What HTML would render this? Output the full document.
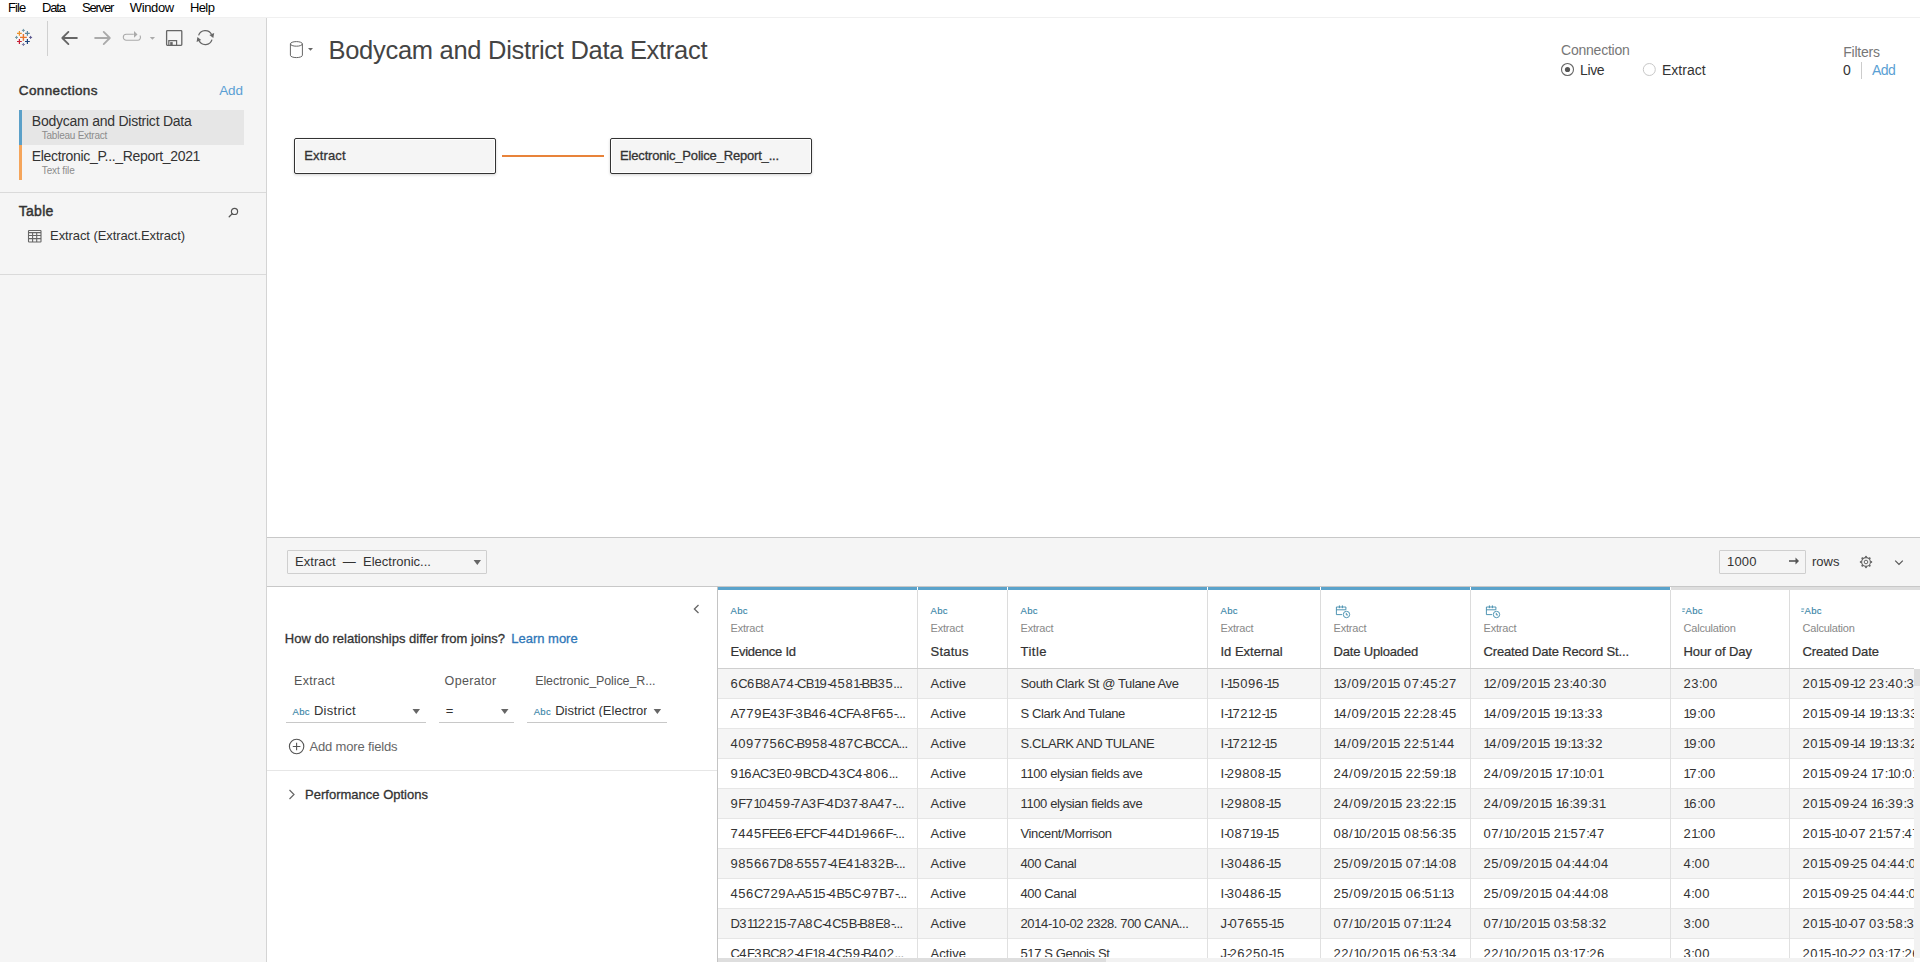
<!DOCTYPE html>
<html><head><meta charset="utf-8"><title>Tableau - Data Source</title>
<style>
*{box-sizing:border-box;margin:0;padding:0}
html,body{width:1920px;height:962px;overflow:hidden;background:#fff;font-family:"Liberation Sans",sans-serif;color:#333}
.r{position:absolute}
.t{position:absolute;white-space:pre}
</style></head>
<body>
<div class="r" style="left:0px;top:0px;width:1920px;height:17px;background:#fff;"></div><div class="r" style="left:0px;top:18px;width:266px;height:944px;background:#f5f5f5;"></div><div class="r" style="left:266px;top:18px;width:1px;height:944px;background:#d4d4d4;"></div><div class="r" style="left:267px;top:18px;width:1653px;height:519px;background:#fff;"></div><div class="r" style="left:0px;top:17px;width:1920px;height:1px;background:#f0f0f0;"></div><div class="r" style="left:267px;top:537px;width:1653px;height:1px;background:#c8c8c8;"></div><div class="r" style="left:267px;top:538px;width:1653px;height:48px;background:#f5f5f5;"></div><div class="r" style="left:267px;top:586px;width:1653px;height:1px;background:#c8c8c8;"></div><div class="r" style="left:267px;top:587px;width:450px;height:375px;background:#fff;"></div><div class="r" style="left:47px;top:21px;width:1px;height:35px;background:#d0d0d0;"></div><div class="r" style="left:19px;top:110px;width:225px;height:35px;background:#e6e6e6;"></div><div class="r" style="left:19px;top:110px;width:3px;height:35px;background:#5ba0c8;"></div><div class="r" style="left:19px;top:145px;width:3px;height:35px;background:#f5a55b;"></div><div class="r" style="left:0px;top:192px;width:266px;height:1px;background:#dadada;"></div><div class="r" style="left:0px;top:274px;width:266px;height:1px;background:#dadada;"></div><div class="r" style="left:294px;top:138px;width:202px;height:36px;background:#f5f5f5;border:1px solid #333;border-radius:2px;box-shadow:0 1px 3px rgba(0,0,0,0.18), inset 0 0 0 1px #fff;"></div><div class="r" style="left:610px;top:138px;width:202px;height:36px;background:#f5f5f5;border:1px solid #333;border-radius:2px;box-shadow:0 1px 3px rgba(0,0,0,0.18), inset 0 0 0 1px #fff;"></div><div class="r" style="left:502px;top:155px;width:102px;height:2px;background:#e8833a;"></div><div class="r" style="left:1861px;top:62px;width:1px;height:17px;background:#cccccc;"></div><div class="r" style="left:287px;top:550px;width:200px;height:24px;background:#f5f5f5;border:1px solid #cfcfcf;border-radius:1px;"></div><div class="r" style="left:1719px;top:550px;width:87px;height:24px;background:#f5f5f5;border:1px solid #cfcfcf;border-radius:1px;"></div><div class="r" style="left:286px;top:722px;width:140px;height:1px;background:#c8c8c8;"></div><div class="r" style="left:439px;top:722px;width:75px;height:1px;background:#c8c8c8;"></div><div class="r" style="left:527px;top:722px;width:140px;height:1px;background:#c8c8c8;"></div><div class="r" style="left:267px;top:770px;width:450px;height:1px;background:#e6e6e6;"></div><div class="r" style="left:717px;top:587px;width:1203px;height:375px;background:#fff;"></div><div class="r" style="left:717px;top:586px;width:1px;height:376px;background:#c4c4c4;"></div><div class="r" style="left:917px;top:590px;width:1px;height:368px;background:#dcdcdc;"></div><div class="r" style="left:1007px;top:590px;width:1px;height:368px;background:#dcdcdc;"></div><div class="r" style="left:1207px;top:590px;width:1px;height:368px;background:#dcdcdc;"></div><div class="r" style="left:1320px;top:590px;width:1px;height:368px;background:#dcdcdc;"></div><div class="r" style="left:1470px;top:590px;width:1px;height:368px;background:#dcdcdc;"></div><div class="r" style="left:1670px;top:590px;width:1px;height:368px;background:#dcdcdc;"></div><div class="r" style="left:1789px;top:590px;width:1px;height:368px;background:#dcdcdc;"></div><div class="r" style="left:718px;top:587px;width:199px;height:3px;background:#5ba3cb;"></div><div class="r" style="left:918px;top:587px;width:89px;height:3px;background:#5ba3cb;"></div><div class="r" style="left:1008px;top:587px;width:199px;height:3px;background:#5ba3cb;"></div><div class="r" style="left:1208px;top:587px;width:112px;height:3px;background:#5ba3cb;"></div><div class="r" style="left:1321px;top:587px;width:149px;height:3px;background:#5ba3cb;"></div><div class="r" style="left:1471px;top:587px;width:199px;height:3px;background:#5ba3cb;"></div><div class="r" style="left:1671px;top:587px;width:249px;height:3px;background:#dedede;"></div><div class="r" style="left:718px;top:668px;width:1196px;height:1px;background:#cfcfcf;"></div><div class="r" style="left:718px;top:669px;width:1196px;height:29px;background:#f5f5f5;"></div><div class="r" style="left:718px;top:698px;width:1196px;height:1px;background:#e6e6e6;"></div><div class="r" style="left:718px;top:728px;width:1196px;height:1px;background:#e6e6e6;"></div><div class="r" style="left:718px;top:729px;width:1196px;height:29px;background:#f5f5f5;"></div><div class="r" style="left:718px;top:758px;width:1196px;height:1px;background:#e6e6e6;"></div><div class="r" style="left:718px;top:788px;width:1196px;height:1px;background:#e6e6e6;"></div><div class="r" style="left:718px;top:789px;width:1196px;height:29px;background:#f5f5f5;"></div><div class="r" style="left:718px;top:818px;width:1196px;height:1px;background:#e6e6e6;"></div><div class="r" style="left:718px;top:848px;width:1196px;height:1px;background:#e6e6e6;"></div><div class="r" style="left:718px;top:849px;width:1196px;height:29px;background:#f5f5f5;"></div><div class="r" style="left:718px;top:878px;width:1196px;height:1px;background:#e6e6e6;"></div><div class="r" style="left:718px;top:908px;width:1196px;height:1px;background:#e6e6e6;"></div><div class="r" style="left:718px;top:909px;width:1196px;height:29px;background:#f5f5f5;"></div><div class="r" style="left:718px;top:938px;width:1196px;height:1px;background:#e6e6e6;"></div><div class="r" style="left:718px;top:968px;width:1196px;height:1px;background:#e6e6e6;"></div>
<div class="r" style="left:917px;top:669px;width:1px;height:289px;background:#e0e0e0"></div><div class="r" style="left:1007px;top:669px;width:1px;height:289px;background:#e0e0e0"></div><div class="r" style="left:1207px;top:669px;width:1px;height:289px;background:#e0e0e0"></div><div class="r" style="left:1320px;top:669px;width:1px;height:289px;background:#e0e0e0"></div><div class="r" style="left:1470px;top:669px;width:1px;height:289px;background:#e0e0e0"></div><div class="r" style="left:1670px;top:669px;width:1px;height:289px;background:#e0e0e0"></div><div class="r" style="left:1789px;top:669px;width:1px;height:289px;background:#e0e0e0"></div>
<svg class="r" style="left:10px;top:25px" width="28" height="28" viewBox="0 0 28 28"><path d="M10.0 12.4H16.8M13.4 9.0V15.8" stroke="#e8762b" stroke-width="1.4" fill="none"/><path d="M7.0 8.4H11.8M9.4 6.0V10.8" stroke="#eb912b" stroke-width="1.2" fill="none"/><path d="M14.999999999999998 8.4H19.799999999999997M17.4 6.0V10.8" stroke="#5b879b" stroke-width="1.2" fill="none"/><path d="M7.0 16.5H11.8M9.4 14.1V18.9" stroke="#c72037" stroke-width="1.2" fill="none"/><path d="M14.999999999999998 16.5H19.799999999999997M17.4 14.1V18.9" stroke="#1f457e" stroke-width="1.2" fill="none"/><path d="M11.9 5.4H14.9M13.4 3.9000000000000004V6.9" stroke="#7099a6" stroke-width="1.0" fill="none"/><path d="M5.0 12.4H8.0M6.5 10.9V13.9" stroke="#7099a6" stroke-width="1.0" fill="none"/><path d="M19.1 12.4H22.1M20.6 10.9V13.9" stroke="#59568e" stroke-width="1.0" fill="none"/><path d="M11.9 19.5H14.9M13.4 18.0V21.0" stroke="#7d7fa8" stroke-width="1.0" fill="none"/></svg><svg class="r" style="left:58px;top:28px" width="24" height="20" viewBox="0 0 24 20"><path d="M18.9 10H5M10.4 3.9L4.3 10L10.4 16.1" stroke="#666" stroke-width="1.8" fill="none" stroke-linecap="round" stroke-linejoin="round"/></svg><svg class="r" style="left:90px;top:28px" width="24" height="20" viewBox="0 0 24 20"><path d="M5.1 10H19M13.7 3.9L19.8 10L13.7 16.1" stroke="#aaa" stroke-width="1.8" fill="none" stroke-linecap="round" stroke-linejoin="round"/></svg><svg class="r" style="left:120px;top:28px" width="40" height="20" viewBox="0 0 40 20"><path d="M13.8 6.3H6.3A3 3 0 0 0 6.3 12.3H17.5A3 3 0 0 0 19.9 7.5" stroke="#aaa" stroke-width="1.1" fill="none"/><path d="M14 3.1L17.5 6.4L14 9.8Z" fill="#aaa"/><path d="M29.8 9H35L32.4 11.8Z" fill="#aaa"/></svg><svg class="r" style="left:164px;top:28px" width="22" height="22" viewBox="0 0 22 22"><rect x="2.6" y="2.6" width="15.2" height="14.7" rx="0.8" stroke="#666" stroke-width="1.3" fill="none"/><path d="M4.8 17.2V12.6H12.6V17.2" stroke="#666" stroke-width="1.2" fill="none"/><rect x="6.2" y="14.1" width="2.5" height="3" fill="#666"/></svg><svg class="r" style="left:194px;top:27px" width="24" height="22" viewBox="0 0 24 22"><path d="M4.6 8.4A7 7 0 0 1 17.6 7.6M18 12.6A7 7 0 0 1 5 13.6" stroke="#666" stroke-width="1.25" fill="none"/><path d="M15.4 7.9L20.2 6.1L19.3 10.9Z" fill="#666"/><path d="M7.2 13.1L2.6 14.9L3.4 10.1Z" fill="#666"/></svg><svg class="r" style="left:226px;top:205px" width="14" height="14" viewBox="0 0 14 14"><circle cx="8.5" cy="6.4" r="3.1" stroke="#555" stroke-width="1.2" fill="none"/><path d="M6.3 8.6L3.2 11.7" stroke="#555" stroke-width="1.3" stroke-linecap="round"/></svg><svg class="r" style="left:27px;top:229px" width="16" height="15" viewBox="0 0 16 15"><rect x="1.5" y="1.5" width="12.5" height="11.5" rx="0.6" stroke="#666" stroke-width="1.1" fill="none"/><path d="M1.5 3.6H14M1.5 6.5H14M1.5 9.6H14M5.6 3.6V13M9.7 3.6V13" stroke="#666" stroke-width="1.1" fill="none"/></svg><svg class="r" style="left:286px;top:38px" width="32" height="24" viewBox="0 0 32 24"><ellipse cx="10.4" cy="5.9" rx="6" ry="2.3" stroke="#666" stroke-width="1" fill="none"/><path d="M4.4 5.9V17.3A6 2.3 0 0 0 16.4 17.3V5.9" stroke="#666" stroke-width="1" fill="none"/><path d="M22 10H27L24.5 12.8Z" fill="#666"/></svg><svg class="r" style="left:1559px;top:62px" width="18" height="16" viewBox="0 0 18 16"><circle cx="8.5" cy="7.5" r="6" stroke="#666" stroke-width="1.1" fill="#fff"/><circle cx="8.5" cy="7.5" r="2.6" fill="#555"/></svg><svg class="r" style="left:1641px;top:62px" width="18" height="16" viewBox="0 0 18 16"><circle cx="8.3" cy="7.5" r="6" stroke="#c8c8c8" stroke-width="1" fill="#fff"/></svg><svg class="r" style="left:470px;top:556px" width="14" height="12" viewBox="0 0 14 12"><path d="M3.6 4H11L7.3 9Z" fill="#666"/></svg><svg class="r" style="left:1786px;top:554px" width="16" height="14" viewBox="0 0 16 14"><path d="M3 7H10.5" stroke="#555" stroke-width="1.6"/><path d="M9.5 3.6L13 7L9.5 10.4Z" fill="#555"/></svg><svg class="r" style="left:1858px;top:554px" width="16" height="16" viewBox="0 0 16 16"><circle cx="8" cy="8" r="4.4" stroke="#666" stroke-width="1.1" fill="none"/><rect x="7.1" y="1.9" width="1.8" height="1.8" transform="rotate(0 8 8)" fill="#666"/><rect x="7.1" y="1.9" width="1.8" height="1.8" transform="rotate(45 8 8)" fill="#666"/><rect x="7.1" y="1.9" width="1.8" height="1.8" transform="rotate(90 8 8)" fill="#666"/><rect x="7.1" y="1.9" width="1.8" height="1.8" transform="rotate(135 8 8)" fill="#666"/><rect x="7.1" y="1.9" width="1.8" height="1.8" transform="rotate(180 8 8)" fill="#666"/><rect x="7.1" y="1.9" width="1.8" height="1.8" transform="rotate(225 8 8)" fill="#666"/><rect x="7.1" y="1.9" width="1.8" height="1.8" transform="rotate(270 8 8)" fill="#666"/><rect x="7.1" y="1.9" width="1.8" height="1.8" transform="rotate(315 8 8)" fill="#666"/><circle cx="8" cy="8" r="1.8" stroke="#666" stroke-width="1" fill="none"/></svg><svg class="r" style="left:1891px;top:556px" width="16" height="12" viewBox="0 0 16 12"><path d="M4.2 4.6L8 8.4L11.8 4.6" stroke="#555" stroke-width="1.2" fill="none"/></svg><svg class="r" style="left:690px;top:602px" width="12" height="14" viewBox="0 0 12 14"><path d="M8.5 3L4.4 7L8.5 11" stroke="#666" stroke-width="1.3" fill="none"/></svg><svg class="r" style="left:286px;top:787px" width="12" height="14" viewBox="0 0 12 14"><path d="M3.5 3L8 7.5L3.5 12" stroke="#666" stroke-width="1.2" fill="none"/></svg><svg class="r" style="left:411px;top:706px" width="12" height="10" viewBox="0 0 12 10"><path d="M1.5 3H9.0L5.25 8Z" fill="#666"/></svg><svg class="r" style="left:500px;top:706px" width="12" height="10" viewBox="0 0 12 10"><path d="M1 3H8.5L4.75 8Z" fill="#666"/></svg><svg class="r" style="left:652px;top:706px" width="12" height="10" viewBox="0 0 12 10"><path d="M1.6000000000000227 3H9.100000000000023L5.350000000000023 8Z" fill="#666"/></svg><svg class="r" style="left:287px;top:737px" width="19" height="19" viewBox="0 0 19 19"><circle cx="9.6" cy="9.5" r="7.2" stroke="#555" stroke-width="1.1" fill="none"/><path d="M5.8 9.5H13.4M9.6 5.7V13.3" stroke="#555" stroke-width="1.1"/></svg><svg class="r" style="left:1334px;top:603px" width="18" height="16" viewBox="0 0 18 16"><path d="M8.1 11.6H2.4V4H11.9V6.8M2.4 6.8H11.9M5.4 2.4V5.2M8.4 2.4V5.2" stroke="#3e8aab" stroke-width="0.9" fill="none"/><circle cx="12.5" cy="11.5" r="3.2" stroke="#3e8aab" stroke-width="0.9" fill="#fff"/><path d="M12.3 9.9V11.9H14" stroke="#3e8aab" stroke-width="0.9" fill="none"/></svg><svg class="r" style="left:1484px;top:603px" width="18" height="16" viewBox="0 0 18 16"><path d="M8.1 11.6H2.4V4H11.9V6.8M2.4 6.8H11.9M5.4 2.4V5.2M8.4 2.4V5.2" stroke="#3e8aab" stroke-width="0.9" fill="none"/><circle cx="12.5" cy="11.5" r="3.2" stroke="#3e8aab" stroke-width="0.9" fill="#fff"/><path d="M12.3 9.9V11.9H14" stroke="#3e8aab" stroke-width="0.9" fill="none"/></svg><svg class="r" style="left:1682px;top:604px" width="6" height="10" viewBox="0 0 6 10"><path d="M0.3 5H3.2M0.3 7.4H2.6" stroke="#3e8aab" stroke-width="0.9"/></svg><svg class="r" style="left:1801px;top:604px" width="6" height="10" viewBox="0 0 6 10"><path d="M0.3 5H3.2M0.3 7.4H2.6" stroke="#3e8aab" stroke-width="0.9"/></svg>
<div class="t" style="left:7.90px;top:1.00px;font-size:13px;line-height:13px;color:#000;letter-spacing:-0.884px;">File</div>
<div class="t" style="left:42.00px;top:1.00px;font-size:13px;line-height:13px;color:#000;letter-spacing:-1.123px;">Data</div>
<div class="t" style="left:81.90px;top:1.00px;font-size:13px;line-height:13px;color:#000;letter-spacing:-1.179px;">Server</div>
<div class="t" style="left:129.80px;top:1.00px;font-size:13px;line-height:13px;color:#000;letter-spacing:-0.370px;">Window</div>
<div class="t" style="left:189.90px;top:1.00px;font-size:13px;line-height:13px;color:#000;letter-spacing:-0.583px;">Help</div>
<div class="t" style="left:18.80px;top:83.75px;font-size:13.5px;line-height:13.5px;color:#333;-webkit-text-stroke:0.450px #333;letter-spacing:0.364px;">Connections</div>
<div class="t" style="left:219.30px;top:83.75px;font-size:13.5px;line-height:13.5px;color:#5a9fd4;letter-spacing:-0.216px;">Add</div>
<div class="t" style="left:31.80px;top:114.00px;font-size:14px;line-height:14px;color:#333;letter-spacing:-0.239px;">Bodycam and District Data</div>
<div class="t" style="left:41.80px;top:130.50px;font-size:10px;line-height:10px;color:#8c8c8c;letter-spacing:-0.246px;">Tableau Extract</div>
<div class="t" style="left:31.80px;top:149.00px;font-size:14px;line-height:14px;color:#333;letter-spacing:-0.331px;">Electronic_P..._Report_2021</div>
<div class="t" style="left:41.80px;top:165.50px;font-size:10px;line-height:10px;color:#8c8c8c;letter-spacing:-0.126px;">Text file</div>
<div class="t" style="left:18.70px;top:204.00px;font-size:14px;line-height:14px;color:#333;-webkit-text-stroke:0.450px #333;letter-spacing:0.308px;">Table</div>
<div class="t" style="left:50.10px;top:229.00px;font-size:13px;line-height:13px;color:#333;letter-spacing:-0.094px;">Extract (Extract.Extract)</div>
<div class="t" style="left:328.50px;top:37.85px;font-size:25.5px;line-height:25.5px;color:#444;letter-spacing:-0.291px;">Bodycam and District Data Extract</div>
<div class="t" style="left:1561.00px;top:43.00px;font-size:14px;line-height:14px;color:#777;letter-spacing:-0.225px;">Connection</div>
<div class="t" style="left:1580.10px;top:63.00px;font-size:14px;line-height:14px;color:#333;letter-spacing:-0.396px;">Live</div>
<div class="t" style="left:1662.00px;top:63.00px;font-size:14px;line-height:14px;color:#333;">Extract</div>
<div class="t" style="left:1843.30px;top:45.00px;font-size:14px;line-height:14px;color:#777;letter-spacing:-0.254px;">Filters</div>
<div class="t" style="left:1842.90px;top:63.00px;font-size:14px;line-height:14px;color:#333;">0</div>
<div class="t" style="left:1872.10px;top:63.00px;font-size:14px;line-height:14px;color:#5a9fd4;letter-spacing:-0.661px;">Add</div>
<div class="t" style="left:304.25px;top:149.00px;font-size:13px;line-height:13px;color:#333;-webkit-text-stroke:0.300px #333;letter-spacing:0.139px;">Extract</div>
<div class="t" style="left:620.10px;top:149.00px;font-size:13px;line-height:13px;color:#333;-webkit-text-stroke:0.300px #333;letter-spacing:-0.186px;">Electronic_Police_Report_...</div>
<div class="t" style="left:295.10px;top:555.00px;font-size:13px;line-height:13px;color:#333;">Extract  —  Electronic...</div>
<div class="t" style="left:1727.00px;top:555.00px;font-size:13px;line-height:13px;color:#333;letter-spacing:0.193px;">1000</div>
<div class="t" style="left:1812.10px;top:555.00px;font-size:13px;line-height:13px;color:#333;letter-spacing:-0.051px;">rows</div>
<div class="t" style="left:284.80px;top:632.00px;font-size:13px;line-height:13px;color:#333;-webkit-text-stroke:0.300px #333;">How do relationships differ from joins?</div>
<div class="t" style="left:511.20px;top:632.00px;font-size:13px;line-height:13px;color:#2f77b8;-webkit-text-stroke:0.300px #2f77b8;">Learn more</div>
<div class="t" style="left:294.10px;top:674.75px;font-size:12.5px;line-height:12.5px;color:#555;letter-spacing:0.282px;">Extract</div>
<div class="t" style="left:444.60px;top:674.75px;font-size:12.5px;line-height:12.5px;color:#555;letter-spacing:0.322px;">Operator</div>
<div class="t" style="left:535.20px;top:674.75px;font-size:12.5px;line-height:12.5px;color:#555;letter-spacing:-0.094px;">Electronic_Police_R...</div>
<div class="t" style="left:292.50px;top:706.75px;font-size:9.5px;line-height:9.5px;color:#3784a6;-webkit-text-stroke:0.120px #3784a6;letter-spacing:0.312px;">Abc</div>
<div class="t" style="left:313.90px;top:704.00px;font-size:13px;line-height:13px;color:#333;letter-spacing:0.297px;">District</div>
<div class="t" style="left:445.80px;top:704.00px;font-size:13px;line-height:13px;color:#333;">=</div>
<div class="t" style="left:533.70px;top:706.75px;font-size:9.5px;line-height:9.5px;color:#3784a6;-webkit-text-stroke:0.120px #3784a6;letter-spacing:0.312px;">Abc</div>
<div class="t" style="left:555.20px;top:704.00px;font-size:13px;line-height:13px;color:#333;width:92px;overflow:hidden;">District (Electronic</div>
<div class="t" style="left:309.50px;top:740.00px;font-size:13px;line-height:13px;color:#666;letter-spacing:-0.166px;">Add more fields</div>
<div class="t" style="left:305.10px;top:787.60px;font-size:13px;line-height:13px;color:#333;-webkit-text-stroke:0.300px #333;">Performance Options</div>
<div class="r" style="left:0;top:0;width:1914px;height:957px;overflow:hidden"><div class="t" style="left:730.50px;top:605.75px;font-size:9.5px;line-height:9.5px;color:#3784a6;-webkit-text-stroke:0.120px #3784a6;letter-spacing:0.312px;">Abc</div>
<div class="t" style="left:730.50px;top:622.50px;font-size:11px;line-height:11px;color:#888;letter-spacing:-0.206px;">Extract</div>
<div class="t" style="left:730.50px;top:645.00px;font-size:13px;line-height:13px;color:#333;-webkit-text-stroke:0.225px #333;letter-spacing:-0.244px;">Evidence Id</div>
<div class="t" style="left:930.50px;top:605.75px;font-size:9.5px;line-height:9.5px;color:#3784a6;-webkit-text-stroke:0.120px #3784a6;letter-spacing:0.312px;">Abc</div>
<div class="t" style="left:930.50px;top:622.50px;font-size:11px;line-height:11px;color:#888;letter-spacing:-0.206px;">Extract</div>
<div class="t" style="left:930.50px;top:645.00px;font-size:13px;line-height:13px;color:#333;-webkit-text-stroke:0.225px #333;letter-spacing:0.228px;">Status</div>
<div class="t" style="left:1020.50px;top:605.75px;font-size:9.5px;line-height:9.5px;color:#3784a6;-webkit-text-stroke:0.120px #3784a6;letter-spacing:0.312px;">Abc</div>
<div class="t" style="left:1020.50px;top:622.50px;font-size:11px;line-height:11px;color:#888;letter-spacing:-0.206px;">Extract</div>
<div class="t" style="left:1020.50px;top:645.00px;font-size:13px;line-height:13px;color:#333;-webkit-text-stroke:0.225px #333;letter-spacing:0.480px;">Title</div>
<div class="t" style="left:1220.50px;top:605.75px;font-size:9.5px;line-height:9.5px;color:#3784a6;-webkit-text-stroke:0.120px #3784a6;letter-spacing:0.312px;">Abc</div>
<div class="t" style="left:1220.50px;top:622.50px;font-size:11px;line-height:11px;color:#888;letter-spacing:-0.206px;">Extract</div>
<div class="t" style="left:1220.50px;top:645.00px;font-size:13px;line-height:13px;color:#333;-webkit-text-stroke:0.225px #333;">Id External</div>
<div class="t" style="left:1333.50px;top:622.50px;font-size:11px;line-height:11px;color:#888;letter-spacing:-0.206px;">Extract</div>
<div class="t" style="left:1333.50px;top:645.00px;font-size:13px;line-height:13px;color:#333;-webkit-text-stroke:0.225px #333;letter-spacing:-0.170px;">Date Uploaded</div>
<div class="t" style="left:1483.50px;top:622.50px;font-size:11px;line-height:11px;color:#888;letter-spacing:-0.206px;">Extract</div>
<div class="t" style="left:1483.50px;top:645.00px;font-size:13px;line-height:13px;color:#333;-webkit-text-stroke:0.225px #333;letter-spacing:-0.170px;">Created Date Record St...</div>
<div class="t" style="left:1685.50px;top:605.75px;font-size:9.5px;line-height:9.5px;color:#3784a6;-webkit-text-stroke:0.120px #3784a6;letter-spacing:0.312px;">Abc</div>
<div class="t" style="left:1683.50px;top:622.50px;font-size:11px;line-height:11px;color:#888;letter-spacing:-0.202px;">Calculation</div>
<div class="t" style="left:1683.50px;top:645.00px;font-size:13px;line-height:13px;color:#333;-webkit-text-stroke:0.225px #333;letter-spacing:-0.097px;">Hour of Day</div>
<div class="t" style="left:1804.50px;top:605.75px;font-size:9.5px;line-height:9.5px;color:#3784a6;-webkit-text-stroke:0.120px #3784a6;letter-spacing:0.312px;">Abc</div>
<div class="t" style="left:1802.50px;top:622.50px;font-size:11px;line-height:11px;color:#888;letter-spacing:-0.202px;">Calculation</div>
<div class="t" style="left:1802.50px;top:645.00px;font-size:13px;line-height:13px;color:#333;-webkit-text-stroke:0.225px #333;letter-spacing:-0.084px;">Created Date</div>
<div class="t" style="left:730.50px;top:677.00px;font-size:13px;line-height:13px;color:#333;"><span style="letter-spacing:0.57px">6</span><span style="letter-spacing:-0.65px">C</span><span style="letter-spacing:0.57px">6</span><span style="letter-spacing:-0.65px">B</span><span style="letter-spacing:0.57px">8</span><span style="letter-spacing:-0.65px">A</span><span style="letter-spacing:0.57px">74</span><span style="letter-spacing:-1.80px">-</span><span style="letter-spacing:-0.65px">CB</span><span style="letter-spacing:-1.43px">1</span><span style="letter-spacing:0.57px">9</span><span style="letter-spacing:-1.80px">-</span><span style="letter-spacing:0.57px">458</span><span style="letter-spacing:-1.43px">1</span><span style="letter-spacing:-1.80px">-</span><span style="letter-spacing:-0.65px">BB</span><span style="letter-spacing:0.57px">35</span><span style="letter-spacing:-0.65px">...</span></div>
<div class="t" style="left:930.50px;top:677.00px;font-size:13px;line-height:13px;color:#333;">Active</div>
<div class="t" style="left:1020.50px;top:677.00px;font-size:13px;line-height:13px;color:#333;letter-spacing:-0.380px;">South Clark St @ Tulane Ave</div>
<div class="t" style="left:1220.50px;top:677.00px;font-size:13px;line-height:13px;color:#333;">I<span style="letter-spacing:-1.80px">-</span><span style="letter-spacing:-1.43px">1</span><span style="letter-spacing:0.57px">5096</span><span style="letter-spacing:-1.80px">-</span><span style="letter-spacing:-1.43px">1</span><span style="letter-spacing:0.57px">5</span></div>
<div class="t" style="left:1333.50px;top:677.00px;font-size:13px;line-height:13px;color:#333;"><span style="letter-spacing:-1.43px">1</span><span style="letter-spacing:0.57px">3</span><span style="letter-spacing:0.80px">/</span><span style="letter-spacing:0.57px">09</span><span style="letter-spacing:0.80px">/</span><span style="letter-spacing:0.57px">20</span><span style="letter-spacing:-1.43px">1</span><span style="letter-spacing:0.57px">5</span><span style="letter-spacing:-0.60px"> </span><span style="letter-spacing:0.57px">07</span><span style="letter-spacing:-0.50px">:</span><span style="letter-spacing:0.57px">45</span><span style="letter-spacing:-0.50px">:</span><span style="letter-spacing:0.57px">27</span></div>
<div class="t" style="left:1483.50px;top:677.00px;font-size:13px;line-height:13px;color:#333;"><span style="letter-spacing:-1.43px">1</span><span style="letter-spacing:0.57px">2</span><span style="letter-spacing:0.80px">/</span><span style="letter-spacing:0.57px">09</span><span style="letter-spacing:0.80px">/</span><span style="letter-spacing:0.57px">20</span><span style="letter-spacing:-1.43px">1</span><span style="letter-spacing:0.57px">5</span><span style="letter-spacing:-0.60px"> </span><span style="letter-spacing:0.57px">23</span><span style="letter-spacing:-0.50px">:</span><span style="letter-spacing:0.57px">40</span><span style="letter-spacing:-0.50px">:</span><span style="letter-spacing:0.57px">30</span></div>
<div class="t" style="left:1683.50px;top:677.00px;font-size:13px;line-height:13px;color:#333;"><span style="letter-spacing:0.57px">23</span><span style="letter-spacing:-0.50px">:</span><span style="letter-spacing:0.57px">00</span></div>
<div class="t" style="left:1802.50px;top:677.00px;font-size:13px;line-height:13px;color:#333;"><span style="letter-spacing:0.57px">20</span><span style="letter-spacing:-1.43px">1</span><span style="letter-spacing:0.57px">5</span><span style="letter-spacing:-1.80px">-</span><span style="letter-spacing:0.57px">09</span><span style="letter-spacing:-1.80px">-</span><span style="letter-spacing:-1.43px">1</span><span style="letter-spacing:0.57px">2</span><span style="letter-spacing:-0.60px"> </span><span style="letter-spacing:0.57px">23</span><span style="letter-spacing:-0.50px">:</span><span style="letter-spacing:0.57px">40</span><span style="letter-spacing:-0.50px">:</span><span style="letter-spacing:0.57px">30</span></div>
<div class="t" style="left:730.50px;top:707.00px;font-size:13px;line-height:13px;color:#333;"><span style="letter-spacing:-0.65px">A</span><span style="letter-spacing:0.57px">779</span><span style="letter-spacing:-0.65px">E</span><span style="letter-spacing:0.57px">43</span><span style="letter-spacing:-0.65px">F</span><span style="letter-spacing:-1.80px">-</span><span style="letter-spacing:0.57px">3</span><span style="letter-spacing:-0.65px">B</span><span style="letter-spacing:0.57px">46</span><span style="letter-spacing:-1.80px">-</span><span style="letter-spacing:0.57px">4</span><span style="letter-spacing:-0.65px">CFA</span><span style="letter-spacing:-1.80px">-</span><span style="letter-spacing:0.57px">8</span><span style="letter-spacing:-0.65px">F</span><span style="letter-spacing:0.57px">65</span><span style="letter-spacing:-1.80px">-</span><span style="letter-spacing:-0.65px">...</span></div>
<div class="t" style="left:930.50px;top:707.00px;font-size:13px;line-height:13px;color:#333;">Active</div>
<div class="t" style="left:1020.50px;top:707.00px;font-size:13px;line-height:13px;color:#333;letter-spacing:-0.380px;">S Clark And Tulane</div>
<div class="t" style="left:1220.50px;top:707.00px;font-size:13px;line-height:13px;color:#333;">I<span style="letter-spacing:-1.80px">-</span><span style="letter-spacing:-1.43px">1</span><span style="letter-spacing:0.57px">72</span><span style="letter-spacing:-1.43px">1</span><span style="letter-spacing:0.57px">2</span><span style="letter-spacing:-1.80px">-</span><span style="letter-spacing:-1.43px">1</span><span style="letter-spacing:0.57px">5</span></div>
<div class="t" style="left:1333.50px;top:707.00px;font-size:13px;line-height:13px;color:#333;"><span style="letter-spacing:-1.43px">1</span><span style="letter-spacing:0.57px">4</span><span style="letter-spacing:0.80px">/</span><span style="letter-spacing:0.57px">09</span><span style="letter-spacing:0.80px">/</span><span style="letter-spacing:0.57px">20</span><span style="letter-spacing:-1.43px">1</span><span style="letter-spacing:0.57px">5</span><span style="letter-spacing:-0.60px"> </span><span style="letter-spacing:0.57px">22</span><span style="letter-spacing:-0.50px">:</span><span style="letter-spacing:0.57px">28</span><span style="letter-spacing:-0.50px">:</span><span style="letter-spacing:0.57px">45</span></div>
<div class="t" style="left:1483.50px;top:707.00px;font-size:13px;line-height:13px;color:#333;"><span style="letter-spacing:-1.43px">1</span><span style="letter-spacing:0.57px">4</span><span style="letter-spacing:0.80px">/</span><span style="letter-spacing:0.57px">09</span><span style="letter-spacing:0.80px">/</span><span style="letter-spacing:0.57px">20</span><span style="letter-spacing:-1.43px">1</span><span style="letter-spacing:0.57px">5</span><span style="letter-spacing:-0.60px"> </span><span style="letter-spacing:-1.43px">1</span><span style="letter-spacing:0.57px">9</span><span style="letter-spacing:-0.50px">:</span><span style="letter-spacing:-1.43px">1</span><span style="letter-spacing:0.57px">3</span><span style="letter-spacing:-0.50px">:</span><span style="letter-spacing:0.57px">33</span></div>
<div class="t" style="left:1683.50px;top:707.00px;font-size:13px;line-height:13px;color:#333;"><span style="letter-spacing:-1.43px">1</span><span style="letter-spacing:0.57px">9</span><span style="letter-spacing:-0.50px">:</span><span style="letter-spacing:0.57px">00</span></div>
<div class="t" style="left:1802.50px;top:707.00px;font-size:13px;line-height:13px;color:#333;"><span style="letter-spacing:0.57px">20</span><span style="letter-spacing:-1.43px">1</span><span style="letter-spacing:0.57px">5</span><span style="letter-spacing:-1.80px">-</span><span style="letter-spacing:0.57px">09</span><span style="letter-spacing:-1.80px">-</span><span style="letter-spacing:-1.43px">1</span><span style="letter-spacing:0.57px">4</span><span style="letter-spacing:-0.60px"> </span><span style="letter-spacing:-1.43px">1</span><span style="letter-spacing:0.57px">9</span><span style="letter-spacing:-0.50px">:</span><span style="letter-spacing:-1.43px">1</span><span style="letter-spacing:0.57px">3</span><span style="letter-spacing:-0.50px">:</span><span style="letter-spacing:0.57px">33</span></div>
<div class="t" style="left:730.50px;top:737.00px;font-size:13px;line-height:13px;color:#333;"><span style="letter-spacing:0.57px">4097756</span><span style="letter-spacing:-0.65px">C</span><span style="letter-spacing:-1.80px">-</span><span style="letter-spacing:-0.65px">B</span><span style="letter-spacing:0.57px">958</span><span style="letter-spacing:-1.80px">-</span><span style="letter-spacing:0.57px">487</span><span style="letter-spacing:-0.65px">C</span><span style="letter-spacing:-1.80px">-</span><span style="letter-spacing:-0.65px">BCCA...</span></div>
<div class="t" style="left:930.50px;top:737.00px;font-size:13px;line-height:13px;color:#333;">Active</div>
<div class="t" style="left:1020.50px;top:737.00px;font-size:13px;line-height:13px;color:#333;letter-spacing:-0.380px;">S.CLARK AND TULANE</div>
<div class="t" style="left:1220.50px;top:737.00px;font-size:13px;line-height:13px;color:#333;">I<span style="letter-spacing:-1.80px">-</span><span style="letter-spacing:-1.43px">1</span><span style="letter-spacing:0.57px">72</span><span style="letter-spacing:-1.43px">1</span><span style="letter-spacing:0.57px">2</span><span style="letter-spacing:-1.80px">-</span><span style="letter-spacing:-1.43px">1</span><span style="letter-spacing:0.57px">5</span></div>
<div class="t" style="left:1333.50px;top:737.00px;font-size:13px;line-height:13px;color:#333;"><span style="letter-spacing:-1.43px">1</span><span style="letter-spacing:0.57px">4</span><span style="letter-spacing:0.80px">/</span><span style="letter-spacing:0.57px">09</span><span style="letter-spacing:0.80px">/</span><span style="letter-spacing:0.57px">20</span><span style="letter-spacing:-1.43px">1</span><span style="letter-spacing:0.57px">5</span><span style="letter-spacing:-0.60px"> </span><span style="letter-spacing:0.57px">22</span><span style="letter-spacing:-0.50px">:</span><span style="letter-spacing:0.57px">5</span><span style="letter-spacing:-1.43px">1</span><span style="letter-spacing:-0.50px">:</span><span style="letter-spacing:0.57px">44</span></div>
<div class="t" style="left:1483.50px;top:737.00px;font-size:13px;line-height:13px;color:#333;"><span style="letter-spacing:-1.43px">1</span><span style="letter-spacing:0.57px">4</span><span style="letter-spacing:0.80px">/</span><span style="letter-spacing:0.57px">09</span><span style="letter-spacing:0.80px">/</span><span style="letter-spacing:0.57px">20</span><span style="letter-spacing:-1.43px">1</span><span style="letter-spacing:0.57px">5</span><span style="letter-spacing:-0.60px"> </span><span style="letter-spacing:-1.43px">1</span><span style="letter-spacing:0.57px">9</span><span style="letter-spacing:-0.50px">:</span><span style="letter-spacing:-1.43px">1</span><span style="letter-spacing:0.57px">3</span><span style="letter-spacing:-0.50px">:</span><span style="letter-spacing:0.57px">32</span></div>
<div class="t" style="left:1683.50px;top:737.00px;font-size:13px;line-height:13px;color:#333;"><span style="letter-spacing:-1.43px">1</span><span style="letter-spacing:0.57px">9</span><span style="letter-spacing:-0.50px">:</span><span style="letter-spacing:0.57px">00</span></div>
<div class="t" style="left:1802.50px;top:737.00px;font-size:13px;line-height:13px;color:#333;"><span style="letter-spacing:0.57px">20</span><span style="letter-spacing:-1.43px">1</span><span style="letter-spacing:0.57px">5</span><span style="letter-spacing:-1.80px">-</span><span style="letter-spacing:0.57px">09</span><span style="letter-spacing:-1.80px">-</span><span style="letter-spacing:-1.43px">1</span><span style="letter-spacing:0.57px">4</span><span style="letter-spacing:-0.60px"> </span><span style="letter-spacing:-1.43px">1</span><span style="letter-spacing:0.57px">9</span><span style="letter-spacing:-0.50px">:</span><span style="letter-spacing:-1.43px">1</span><span style="letter-spacing:0.57px">3</span><span style="letter-spacing:-0.50px">:</span><span style="letter-spacing:0.57px">32</span></div>
<div class="t" style="left:730.50px;top:767.00px;font-size:13px;line-height:13px;color:#333;"><span style="letter-spacing:0.57px">9</span><span style="letter-spacing:-1.43px">1</span><span style="letter-spacing:0.57px">6</span><span style="letter-spacing:-0.65px">AC</span><span style="letter-spacing:0.57px">3</span><span style="letter-spacing:-0.65px">E</span><span style="letter-spacing:0.57px">0</span><span style="letter-spacing:-1.80px">-</span><span style="letter-spacing:0.57px">9</span><span style="letter-spacing:-0.65px">BCD</span><span style="letter-spacing:-1.80px">-</span><span style="letter-spacing:0.57px">43</span><span style="letter-spacing:-0.65px">C</span><span style="letter-spacing:0.57px">4</span><span style="letter-spacing:-1.80px">-</span><span style="letter-spacing:0.57px">806</span><span style="letter-spacing:-0.65px">...</span></div>
<div class="t" style="left:930.50px;top:767.00px;font-size:13px;line-height:13px;color:#333;">Active</div>
<div class="t" style="left:1020.50px;top:767.00px;font-size:13px;line-height:13px;color:#333;letter-spacing:-0.380px;">1100 elysian fields ave</div>
<div class="t" style="left:1220.50px;top:767.00px;font-size:13px;line-height:13px;color:#333;">I<span style="letter-spacing:-1.80px">-</span><span style="letter-spacing:0.57px">29808</span><span style="letter-spacing:-1.80px">-</span><span style="letter-spacing:-1.43px">1</span><span style="letter-spacing:0.57px">5</span></div>
<div class="t" style="left:1333.50px;top:767.00px;font-size:13px;line-height:13px;color:#333;"><span style="letter-spacing:0.57px">24</span><span style="letter-spacing:0.80px">/</span><span style="letter-spacing:0.57px">09</span><span style="letter-spacing:0.80px">/</span><span style="letter-spacing:0.57px">20</span><span style="letter-spacing:-1.43px">1</span><span style="letter-spacing:0.57px">5</span><span style="letter-spacing:-0.60px"> </span><span style="letter-spacing:0.57px">22</span><span style="letter-spacing:-0.50px">:</span><span style="letter-spacing:0.57px">59</span><span style="letter-spacing:-0.50px">:</span><span style="letter-spacing:-1.43px">1</span><span style="letter-spacing:0.57px">8</span></div>
<div class="t" style="left:1483.50px;top:767.00px;font-size:13px;line-height:13px;color:#333;"><span style="letter-spacing:0.57px">24</span><span style="letter-spacing:0.80px">/</span><span style="letter-spacing:0.57px">09</span><span style="letter-spacing:0.80px">/</span><span style="letter-spacing:0.57px">20</span><span style="letter-spacing:-1.43px">1</span><span style="letter-spacing:0.57px">5</span><span style="letter-spacing:-0.60px"> </span><span style="letter-spacing:-1.43px">1</span><span style="letter-spacing:0.57px">7</span><span style="letter-spacing:-0.50px">:</span><span style="letter-spacing:-1.43px">1</span><span style="letter-spacing:0.57px">0</span><span style="letter-spacing:-0.50px">:</span><span style="letter-spacing:0.57px">0</span><span style="letter-spacing:-1.43px">1</span></div>
<div class="t" style="left:1683.50px;top:767.00px;font-size:13px;line-height:13px;color:#333;"><span style="letter-spacing:-1.43px">1</span><span style="letter-spacing:0.57px">7</span><span style="letter-spacing:-0.50px">:</span><span style="letter-spacing:0.57px">00</span></div>
<div class="t" style="left:1802.50px;top:767.00px;font-size:13px;line-height:13px;color:#333;"><span style="letter-spacing:0.57px">20</span><span style="letter-spacing:-1.43px">1</span><span style="letter-spacing:0.57px">5</span><span style="letter-spacing:-1.80px">-</span><span style="letter-spacing:0.57px">09</span><span style="letter-spacing:-1.80px">-</span><span style="letter-spacing:0.57px">24</span><span style="letter-spacing:-0.60px"> </span><span style="letter-spacing:-1.43px">1</span><span style="letter-spacing:0.57px">7</span><span style="letter-spacing:-0.50px">:</span><span style="letter-spacing:-1.43px">1</span><span style="letter-spacing:0.57px">0</span><span style="letter-spacing:-0.50px">:</span><span style="letter-spacing:0.57px">0</span><span style="letter-spacing:-1.43px">1</span></div>
<div class="t" style="left:730.50px;top:797.00px;font-size:13px;line-height:13px;color:#333;"><span style="letter-spacing:0.57px">9</span><span style="letter-spacing:-0.65px">F</span><span style="letter-spacing:0.57px">7</span><span style="letter-spacing:-1.43px">1</span><span style="letter-spacing:0.57px">0459</span><span style="letter-spacing:-1.80px">-</span><span style="letter-spacing:0.57px">7</span><span style="letter-spacing:-0.65px">A</span><span style="letter-spacing:0.57px">3</span><span style="letter-spacing:-0.65px">F</span><span style="letter-spacing:-1.80px">-</span><span style="letter-spacing:0.57px">4</span><span style="letter-spacing:-0.65px">D</span><span style="letter-spacing:0.57px">37</span><span style="letter-spacing:-1.80px">-</span><span style="letter-spacing:0.57px">8</span><span style="letter-spacing:-0.65px">A</span><span style="letter-spacing:0.57px">47</span><span style="letter-spacing:-1.80px">-</span><span style="letter-spacing:-0.65px">...</span></div>
<div class="t" style="left:930.50px;top:797.00px;font-size:13px;line-height:13px;color:#333;">Active</div>
<div class="t" style="left:1020.50px;top:797.00px;font-size:13px;line-height:13px;color:#333;letter-spacing:-0.380px;">1100 elysian fields ave</div>
<div class="t" style="left:1220.50px;top:797.00px;font-size:13px;line-height:13px;color:#333;">I<span style="letter-spacing:-1.80px">-</span><span style="letter-spacing:0.57px">29808</span><span style="letter-spacing:-1.80px">-</span><span style="letter-spacing:-1.43px">1</span><span style="letter-spacing:0.57px">5</span></div>
<div class="t" style="left:1333.50px;top:797.00px;font-size:13px;line-height:13px;color:#333;"><span style="letter-spacing:0.57px">24</span><span style="letter-spacing:0.80px">/</span><span style="letter-spacing:0.57px">09</span><span style="letter-spacing:0.80px">/</span><span style="letter-spacing:0.57px">20</span><span style="letter-spacing:-1.43px">1</span><span style="letter-spacing:0.57px">5</span><span style="letter-spacing:-0.60px"> </span><span style="letter-spacing:0.57px">23</span><span style="letter-spacing:-0.50px">:</span><span style="letter-spacing:0.57px">22</span><span style="letter-spacing:-0.50px">:</span><span style="letter-spacing:-1.43px">1</span><span style="letter-spacing:0.57px">5</span></div>
<div class="t" style="left:1483.50px;top:797.00px;font-size:13px;line-height:13px;color:#333;"><span style="letter-spacing:0.57px">24</span><span style="letter-spacing:0.80px">/</span><span style="letter-spacing:0.57px">09</span><span style="letter-spacing:0.80px">/</span><span style="letter-spacing:0.57px">20</span><span style="letter-spacing:-1.43px">1</span><span style="letter-spacing:0.57px">5</span><span style="letter-spacing:-0.60px"> </span><span style="letter-spacing:-1.43px">1</span><span style="letter-spacing:0.57px">6</span><span style="letter-spacing:-0.50px">:</span><span style="letter-spacing:0.57px">39</span><span style="letter-spacing:-0.50px">:</span><span style="letter-spacing:0.57px">3</span><span style="letter-spacing:-1.43px">1</span></div>
<div class="t" style="left:1683.50px;top:797.00px;font-size:13px;line-height:13px;color:#333;"><span style="letter-spacing:-1.43px">1</span><span style="letter-spacing:0.57px">6</span><span style="letter-spacing:-0.50px">:</span><span style="letter-spacing:0.57px">00</span></div>
<div class="t" style="left:1802.50px;top:797.00px;font-size:13px;line-height:13px;color:#333;"><span style="letter-spacing:0.57px">20</span><span style="letter-spacing:-1.43px">1</span><span style="letter-spacing:0.57px">5</span><span style="letter-spacing:-1.80px">-</span><span style="letter-spacing:0.57px">09</span><span style="letter-spacing:-1.80px">-</span><span style="letter-spacing:0.57px">24</span><span style="letter-spacing:-0.60px"> </span><span style="letter-spacing:-1.43px">1</span><span style="letter-spacing:0.57px">6</span><span style="letter-spacing:-0.50px">:</span><span style="letter-spacing:0.57px">39</span><span style="letter-spacing:-0.50px">:</span><span style="letter-spacing:0.57px">3</span><span style="letter-spacing:-1.43px">1</span></div>
<div class="t" style="left:730.50px;top:827.00px;font-size:13px;line-height:13px;color:#333;"><span style="letter-spacing:0.57px">7445</span><span style="letter-spacing:-0.65px">FEE</span><span style="letter-spacing:0.57px">6</span><span style="letter-spacing:-1.80px">-</span><span style="letter-spacing:-0.65px">EFCF</span><span style="letter-spacing:-1.80px">-</span><span style="letter-spacing:0.57px">44</span><span style="letter-spacing:-0.65px">D</span><span style="letter-spacing:-1.43px">1</span><span style="letter-spacing:-1.80px">-</span><span style="letter-spacing:0.57px">966</span><span style="letter-spacing:-0.65px">F</span><span style="letter-spacing:-1.80px">-</span><span style="letter-spacing:-0.65px">...</span></div>
<div class="t" style="left:930.50px;top:827.00px;font-size:13px;line-height:13px;color:#333;">Active</div>
<div class="t" style="left:1020.50px;top:827.00px;font-size:13px;line-height:13px;color:#333;letter-spacing:-0.380px;">Vincent/Morrison</div>
<div class="t" style="left:1220.50px;top:827.00px;font-size:13px;line-height:13px;color:#333;">I<span style="letter-spacing:-1.80px">-</span><span style="letter-spacing:0.57px">087</span><span style="letter-spacing:-1.43px">1</span><span style="letter-spacing:0.57px">9</span><span style="letter-spacing:-1.80px">-</span><span style="letter-spacing:-1.43px">1</span><span style="letter-spacing:0.57px">5</span></div>
<div class="t" style="left:1333.50px;top:827.00px;font-size:13px;line-height:13px;color:#333;"><span style="letter-spacing:0.57px">08</span><span style="letter-spacing:0.80px">/</span><span style="letter-spacing:-1.43px">1</span><span style="letter-spacing:0.57px">0</span><span style="letter-spacing:0.80px">/</span><span style="letter-spacing:0.57px">20</span><span style="letter-spacing:-1.43px">1</span><span style="letter-spacing:0.57px">5</span><span style="letter-spacing:-0.60px"> </span><span style="letter-spacing:0.57px">08</span><span style="letter-spacing:-0.50px">:</span><span style="letter-spacing:0.57px">56</span><span style="letter-spacing:-0.50px">:</span><span style="letter-spacing:0.57px">35</span></div>
<div class="t" style="left:1483.50px;top:827.00px;font-size:13px;line-height:13px;color:#333;"><span style="letter-spacing:0.57px">07</span><span style="letter-spacing:0.80px">/</span><span style="letter-spacing:-1.43px">1</span><span style="letter-spacing:0.57px">0</span><span style="letter-spacing:0.80px">/</span><span style="letter-spacing:0.57px">20</span><span style="letter-spacing:-1.43px">1</span><span style="letter-spacing:0.57px">5</span><span style="letter-spacing:-0.60px"> </span><span style="letter-spacing:0.57px">2</span><span style="letter-spacing:-1.43px">1</span><span style="letter-spacing:-0.50px">:</span><span style="letter-spacing:0.57px">57</span><span style="letter-spacing:-0.50px">:</span><span style="letter-spacing:0.57px">47</span></div>
<div class="t" style="left:1683.50px;top:827.00px;font-size:13px;line-height:13px;color:#333;"><span style="letter-spacing:0.57px">2</span><span style="letter-spacing:-1.43px">1</span><span style="letter-spacing:-0.50px">:</span><span style="letter-spacing:0.57px">00</span></div>
<div class="t" style="left:1802.50px;top:827.00px;font-size:13px;line-height:13px;color:#333;"><span style="letter-spacing:0.57px">20</span><span style="letter-spacing:-1.43px">1</span><span style="letter-spacing:0.57px">5</span><span style="letter-spacing:-1.80px">-</span><span style="letter-spacing:-1.43px">1</span><span style="letter-spacing:0.57px">0</span><span style="letter-spacing:-1.80px">-</span><span style="letter-spacing:0.57px">07</span><span style="letter-spacing:-0.60px"> </span><span style="letter-spacing:0.57px">2</span><span style="letter-spacing:-1.43px">1</span><span style="letter-spacing:-0.50px">:</span><span style="letter-spacing:0.57px">57</span><span style="letter-spacing:-0.50px">:</span><span style="letter-spacing:0.57px">47</span></div>
<div class="t" style="left:730.50px;top:857.00px;font-size:13px;line-height:13px;color:#333;"><span style="letter-spacing:0.57px">985667</span><span style="letter-spacing:-0.65px">D</span><span style="letter-spacing:0.57px">8</span><span style="letter-spacing:-1.80px">-</span><span style="letter-spacing:0.57px">5557</span><span style="letter-spacing:-1.80px">-</span><span style="letter-spacing:0.57px">4</span><span style="letter-spacing:-0.65px">E</span><span style="letter-spacing:0.57px">4</span><span style="letter-spacing:-1.43px">1</span><span style="letter-spacing:-1.80px">-</span><span style="letter-spacing:0.57px">832</span><span style="letter-spacing:-0.65px">B</span><span style="letter-spacing:-1.80px">-</span><span style="letter-spacing:-0.65px">...</span></div>
<div class="t" style="left:930.50px;top:857.00px;font-size:13px;line-height:13px;color:#333;">Active</div>
<div class="t" style="left:1020.50px;top:857.00px;font-size:13px;line-height:13px;color:#333;letter-spacing:-0.380px;">400 Canal</div>
<div class="t" style="left:1220.50px;top:857.00px;font-size:13px;line-height:13px;color:#333;">I<span style="letter-spacing:-1.80px">-</span><span style="letter-spacing:0.57px">30486</span><span style="letter-spacing:-1.80px">-</span><span style="letter-spacing:-1.43px">1</span><span style="letter-spacing:0.57px">5</span></div>
<div class="t" style="left:1333.50px;top:857.00px;font-size:13px;line-height:13px;color:#333;"><span style="letter-spacing:0.57px">25</span><span style="letter-spacing:0.80px">/</span><span style="letter-spacing:0.57px">09</span><span style="letter-spacing:0.80px">/</span><span style="letter-spacing:0.57px">20</span><span style="letter-spacing:-1.43px">1</span><span style="letter-spacing:0.57px">5</span><span style="letter-spacing:-0.60px"> </span><span style="letter-spacing:0.57px">07</span><span style="letter-spacing:-0.50px">:</span><span style="letter-spacing:-1.43px">1</span><span style="letter-spacing:0.57px">4</span><span style="letter-spacing:-0.50px">:</span><span style="letter-spacing:0.57px">08</span></div>
<div class="t" style="left:1483.50px;top:857.00px;font-size:13px;line-height:13px;color:#333;"><span style="letter-spacing:0.57px">25</span><span style="letter-spacing:0.80px">/</span><span style="letter-spacing:0.57px">09</span><span style="letter-spacing:0.80px">/</span><span style="letter-spacing:0.57px">20</span><span style="letter-spacing:-1.43px">1</span><span style="letter-spacing:0.57px">5</span><span style="letter-spacing:-0.60px"> </span><span style="letter-spacing:0.57px">04</span><span style="letter-spacing:-0.50px">:</span><span style="letter-spacing:0.57px">44</span><span style="letter-spacing:-0.50px">:</span><span style="letter-spacing:0.57px">04</span></div>
<div class="t" style="left:1683.50px;top:857.00px;font-size:13px;line-height:13px;color:#333;"><span style="letter-spacing:0.57px">4</span><span style="letter-spacing:-0.50px">:</span><span style="letter-spacing:0.57px">00</span></div>
<div class="t" style="left:1802.50px;top:857.00px;font-size:13px;line-height:13px;color:#333;"><span style="letter-spacing:0.57px">20</span><span style="letter-spacing:-1.43px">1</span><span style="letter-spacing:0.57px">5</span><span style="letter-spacing:-1.80px">-</span><span style="letter-spacing:0.57px">09</span><span style="letter-spacing:-1.80px">-</span><span style="letter-spacing:0.57px">25</span><span style="letter-spacing:-0.60px"> </span><span style="letter-spacing:0.57px">04</span><span style="letter-spacing:-0.50px">:</span><span style="letter-spacing:0.57px">44</span><span style="letter-spacing:-0.50px">:</span><span style="letter-spacing:0.57px">04</span></div>
<div class="t" style="left:730.50px;top:887.00px;font-size:13px;line-height:13px;color:#333;"><span style="letter-spacing:0.57px">456</span><span style="letter-spacing:-0.65px">C</span><span style="letter-spacing:0.57px">729</span><span style="letter-spacing:-0.65px">A</span><span style="letter-spacing:-1.80px">-</span><span style="letter-spacing:-0.65px">A</span><span style="letter-spacing:0.57px">5</span><span style="letter-spacing:-1.43px">1</span><span style="letter-spacing:0.57px">5</span><span style="letter-spacing:-1.80px">-</span><span style="letter-spacing:0.57px">4</span><span style="letter-spacing:-0.65px">B</span><span style="letter-spacing:0.57px">5</span><span style="letter-spacing:-0.65px">C</span><span style="letter-spacing:-1.80px">-</span><span style="letter-spacing:0.57px">97</span><span style="letter-spacing:-0.65px">B</span><span style="letter-spacing:0.57px">7</span><span style="letter-spacing:-1.80px">-</span><span style="letter-spacing:-0.65px">...</span></div>
<div class="t" style="left:930.50px;top:887.00px;font-size:13px;line-height:13px;color:#333;">Active</div>
<div class="t" style="left:1020.50px;top:887.00px;font-size:13px;line-height:13px;color:#333;letter-spacing:-0.380px;">400 Canal</div>
<div class="t" style="left:1220.50px;top:887.00px;font-size:13px;line-height:13px;color:#333;">I<span style="letter-spacing:-1.80px">-</span><span style="letter-spacing:0.57px">30486</span><span style="letter-spacing:-1.80px">-</span><span style="letter-spacing:-1.43px">1</span><span style="letter-spacing:0.57px">5</span></div>
<div class="t" style="left:1333.50px;top:887.00px;font-size:13px;line-height:13px;color:#333;"><span style="letter-spacing:0.57px">25</span><span style="letter-spacing:0.80px">/</span><span style="letter-spacing:0.57px">09</span><span style="letter-spacing:0.80px">/</span><span style="letter-spacing:0.57px">20</span><span style="letter-spacing:-1.43px">1</span><span style="letter-spacing:0.57px">5</span><span style="letter-spacing:-0.60px"> </span><span style="letter-spacing:0.57px">06</span><span style="letter-spacing:-0.50px">:</span><span style="letter-spacing:0.57px">5</span><span style="letter-spacing:-1.43px">1</span><span style="letter-spacing:-0.50px">:</span><span style="letter-spacing:-1.43px">1</span><span style="letter-spacing:0.57px">3</span></div>
<div class="t" style="left:1483.50px;top:887.00px;font-size:13px;line-height:13px;color:#333;"><span style="letter-spacing:0.57px">25</span><span style="letter-spacing:0.80px">/</span><span style="letter-spacing:0.57px">09</span><span style="letter-spacing:0.80px">/</span><span style="letter-spacing:0.57px">20</span><span style="letter-spacing:-1.43px">1</span><span style="letter-spacing:0.57px">5</span><span style="letter-spacing:-0.60px"> </span><span style="letter-spacing:0.57px">04</span><span style="letter-spacing:-0.50px">:</span><span style="letter-spacing:0.57px">44</span><span style="letter-spacing:-0.50px">:</span><span style="letter-spacing:0.57px">08</span></div>
<div class="t" style="left:1683.50px;top:887.00px;font-size:13px;line-height:13px;color:#333;"><span style="letter-spacing:0.57px">4</span><span style="letter-spacing:-0.50px">:</span><span style="letter-spacing:0.57px">00</span></div>
<div class="t" style="left:1802.50px;top:887.00px;font-size:13px;line-height:13px;color:#333;"><span style="letter-spacing:0.57px">20</span><span style="letter-spacing:-1.43px">1</span><span style="letter-spacing:0.57px">5</span><span style="letter-spacing:-1.80px">-</span><span style="letter-spacing:0.57px">09</span><span style="letter-spacing:-1.80px">-</span><span style="letter-spacing:0.57px">25</span><span style="letter-spacing:-0.60px"> </span><span style="letter-spacing:0.57px">04</span><span style="letter-spacing:-0.50px">:</span><span style="letter-spacing:0.57px">44</span><span style="letter-spacing:-0.50px">:</span><span style="letter-spacing:0.57px">08</span></div>
<div class="t" style="left:730.50px;top:917.00px;font-size:13px;line-height:13px;color:#333;"><span style="letter-spacing:-0.65px">D</span><span style="letter-spacing:0.57px">3</span><span style="letter-spacing:-1.43px">11</span><span style="letter-spacing:0.57px">22</span><span style="letter-spacing:-1.43px">1</span><span style="letter-spacing:0.57px">5</span><span style="letter-spacing:-1.80px">-</span><span style="letter-spacing:0.57px">7</span><span style="letter-spacing:-0.65px">A</span><span style="letter-spacing:0.57px">8</span><span style="letter-spacing:-0.65px">C</span><span style="letter-spacing:-1.80px">-</span><span style="letter-spacing:0.57px">4</span><span style="letter-spacing:-0.65px">C</span><span style="letter-spacing:0.57px">5</span><span style="letter-spacing:-0.65px">B</span><span style="letter-spacing:-1.80px">-</span><span style="letter-spacing:-0.65px">B</span><span style="letter-spacing:0.57px">8</span><span style="letter-spacing:-0.65px">E</span><span style="letter-spacing:0.57px">8</span><span style="letter-spacing:-1.80px">-</span><span style="letter-spacing:-0.65px">...</span></div>
<div class="t" style="left:930.50px;top:917.00px;font-size:13px;line-height:13px;color:#333;">Active</div>
<div class="t" style="left:1020.50px;top:917.00px;font-size:13px;line-height:13px;color:#333;letter-spacing:-0.380px;">2014-10-02 2328. 700 CANA...</div>
<div class="t" style="left:1220.50px;top:917.00px;font-size:13px;line-height:13px;color:#333;">J<span style="letter-spacing:-1.80px">-</span><span style="letter-spacing:0.57px">07655</span><span style="letter-spacing:-1.80px">-</span><span style="letter-spacing:-1.43px">1</span><span style="letter-spacing:0.57px">5</span></div>
<div class="t" style="left:1333.50px;top:917.00px;font-size:13px;line-height:13px;color:#333;"><span style="letter-spacing:0.57px">07</span><span style="letter-spacing:0.80px">/</span><span style="letter-spacing:-1.43px">1</span><span style="letter-spacing:0.57px">0</span><span style="letter-spacing:0.80px">/</span><span style="letter-spacing:0.57px">20</span><span style="letter-spacing:-1.43px">1</span><span style="letter-spacing:0.57px">5</span><span style="letter-spacing:-0.60px"> </span><span style="letter-spacing:0.57px">07</span><span style="letter-spacing:-0.50px">:</span><span style="letter-spacing:-1.43px">11</span><span style="letter-spacing:-0.50px">:</span><span style="letter-spacing:0.57px">24</span></div>
<div class="t" style="left:1483.50px;top:917.00px;font-size:13px;line-height:13px;color:#333;"><span style="letter-spacing:0.57px">07</span><span style="letter-spacing:0.80px">/</span><span style="letter-spacing:-1.43px">1</span><span style="letter-spacing:0.57px">0</span><span style="letter-spacing:0.80px">/</span><span style="letter-spacing:0.57px">20</span><span style="letter-spacing:-1.43px">1</span><span style="letter-spacing:0.57px">5</span><span style="letter-spacing:-0.60px"> </span><span style="letter-spacing:0.57px">03</span><span style="letter-spacing:-0.50px">:</span><span style="letter-spacing:0.57px">58</span><span style="letter-spacing:-0.50px">:</span><span style="letter-spacing:0.57px">32</span></div>
<div class="t" style="left:1683.50px;top:917.00px;font-size:13px;line-height:13px;color:#333;"><span style="letter-spacing:0.57px">3</span><span style="letter-spacing:-0.50px">:</span><span style="letter-spacing:0.57px">00</span></div>
<div class="t" style="left:1802.50px;top:917.00px;font-size:13px;line-height:13px;color:#333;"><span style="letter-spacing:0.57px">20</span><span style="letter-spacing:-1.43px">1</span><span style="letter-spacing:0.57px">5</span><span style="letter-spacing:-1.80px">-</span><span style="letter-spacing:-1.43px">1</span><span style="letter-spacing:0.57px">0</span><span style="letter-spacing:-1.80px">-</span><span style="letter-spacing:0.57px">07</span><span style="letter-spacing:-0.60px"> </span><span style="letter-spacing:0.57px">03</span><span style="letter-spacing:-0.50px">:</span><span style="letter-spacing:0.57px">58</span><span style="letter-spacing:-0.50px">:</span><span style="letter-spacing:0.57px">32</span></div>
<div class="t" style="left:730.50px;top:947.00px;font-size:13px;line-height:13px;color:#333;"><span style="letter-spacing:-0.65px">C</span><span style="letter-spacing:0.57px">4</span><span style="letter-spacing:-0.65px">F</span><span style="letter-spacing:0.57px">3</span><span style="letter-spacing:-0.65px">BC</span><span style="letter-spacing:0.57px">82</span><span style="letter-spacing:-1.80px">-</span><span style="letter-spacing:0.57px">4</span><span style="letter-spacing:-0.65px">F</span><span style="letter-spacing:-1.43px">1</span><span style="letter-spacing:0.57px">8</span><span style="letter-spacing:-1.80px">-</span><span style="letter-spacing:0.57px">4</span><span style="letter-spacing:-0.65px">C</span><span style="letter-spacing:0.57px">59</span><span style="letter-spacing:-1.80px">-</span><span style="letter-spacing:-0.65px">B</span><span style="letter-spacing:0.57px">402</span><span style="letter-spacing:-0.65px">...</span></div>
<div class="t" style="left:930.50px;top:947.00px;font-size:13px;line-height:13px;color:#333;">Active</div>
<div class="t" style="left:1020.50px;top:947.00px;font-size:13px;line-height:13px;color:#333;letter-spacing:-0.380px;">517 S Genois St</div>
<div class="t" style="left:1220.50px;top:947.00px;font-size:13px;line-height:13px;color:#333;">J<span style="letter-spacing:-1.80px">-</span><span style="letter-spacing:0.57px">26250</span><span style="letter-spacing:-1.80px">-</span><span style="letter-spacing:-1.43px">1</span><span style="letter-spacing:0.57px">5</span></div>
<div class="t" style="left:1333.50px;top:947.00px;font-size:13px;line-height:13px;color:#333;"><span style="letter-spacing:0.57px">22</span><span style="letter-spacing:0.80px">/</span><span style="letter-spacing:-1.43px">1</span><span style="letter-spacing:0.57px">0</span><span style="letter-spacing:0.80px">/</span><span style="letter-spacing:0.57px">20</span><span style="letter-spacing:-1.43px">1</span><span style="letter-spacing:0.57px">5</span><span style="letter-spacing:-0.60px"> </span><span style="letter-spacing:0.57px">06</span><span style="letter-spacing:-0.50px">:</span><span style="letter-spacing:0.57px">53</span><span style="letter-spacing:-0.50px">:</span><span style="letter-spacing:0.57px">34</span></div>
<div class="t" style="left:1483.50px;top:947.00px;font-size:13px;line-height:13px;color:#333;"><span style="letter-spacing:0.57px">22</span><span style="letter-spacing:0.80px">/</span><span style="letter-spacing:-1.43px">1</span><span style="letter-spacing:0.57px">0</span><span style="letter-spacing:0.80px">/</span><span style="letter-spacing:0.57px">20</span><span style="letter-spacing:-1.43px">1</span><span style="letter-spacing:0.57px">5</span><span style="letter-spacing:-0.60px"> </span><span style="letter-spacing:0.57px">03</span><span style="letter-spacing:-0.50px">:</span><span style="letter-spacing:-1.43px">1</span><span style="letter-spacing:0.57px">7</span><span style="letter-spacing:-0.50px">:</span><span style="letter-spacing:0.57px">26</span></div>
<div class="t" style="left:1683.50px;top:947.00px;font-size:13px;line-height:13px;color:#333;"><span style="letter-spacing:0.57px">3</span><span style="letter-spacing:-0.50px">:</span><span style="letter-spacing:0.57px">00</span></div>
<div class="t" style="left:1802.50px;top:947.00px;font-size:13px;line-height:13px;color:#333;"><span style="letter-spacing:0.57px">20</span><span style="letter-spacing:-1.43px">1</span><span style="letter-spacing:0.57px">5</span><span style="letter-spacing:-1.80px">-</span><span style="letter-spacing:-1.43px">1</span><span style="letter-spacing:0.57px">0</span><span style="letter-spacing:-1.80px">-</span><span style="letter-spacing:0.57px">22</span><span style="letter-spacing:-0.60px"> </span><span style="letter-spacing:0.57px">03</span><span style="letter-spacing:-0.50px">:</span><span style="letter-spacing:-1.43px">1</span><span style="letter-spacing:0.57px">7</span><span style="letter-spacing:-0.50px">:</span><span style="letter-spacing:0.57px">26</span></div></div>
<div class="r" style="left:1914px;top:669px;width:6px;height:289px;background:#f2f2f2"></div><div class="r" style="left:1914px;top:669px;width:6px;height:17px;background:#dedede"></div><div class="r" style="left:718px;top:958px;width:1196px;height:4px;background:#f2f2f2"></div><div class="r" style="left:718px;top:958px;width:388px;height:4px;background:#dedede"></div>
</body></html>
